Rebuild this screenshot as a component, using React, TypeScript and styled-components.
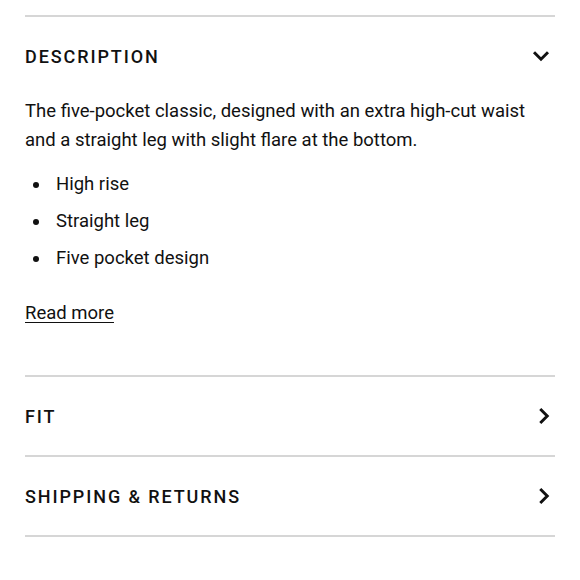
import React from "react";
import styled, { createGlobalStyle } from "styled-components";

const GlobalStyle = createGlobalStyle`
  html, body {
    margin: 0;
    padding: 0;
    background: #ffffff;
  }
  body {
    font-family: Roboto, "Noto Sans", Arial, sans-serif;
    color: #111111;
  }
`;

const Page = styled.div`
  padding: 15px 25px 0;
`;

const Section = styled.section`
  border-top: 2px solid #d6d6d6;
  &:last-child {
    border-bottom: 2px solid #d6d6d6;
  }
`;

const Header = styled.div`
  height: 78px;
  display: flex;
  align-items: center;
  justify-content: space-between;
  cursor: pointer;
`;

const Title = styled.h3`
  margin: 0;
  font-size: 18px;
  font-weight: 500;
  letter-spacing: 1.9px;
  text-transform: uppercase;
  color: #111111;
`;

const Chevron = styled.svg<{ $dir: "down" | "right" }>`
  width: 26px;
  height: 26px;
  margin-right: ${({ $dir }) => ($dir === "down" ? "1px" : "-2px")};
  fill: none;
  stroke: #111111;
  stroke-width: 2.7;
  stroke-linecap: square;
  transform: ${({ $dir }) => ($dir === "right" ? "rotate(-90deg)" : "none")};
`;

const Body = styled.div`
  padding: 2px 0 47px;
  font-size: 18.5px;
  line-height: 29px;
`;

const Paragraph = styled.p`
  margin: 0;
`;

const List = styled.ul`
  margin: 11px 0 0;
  padding: 0;
  list-style: none;
`;

const Item = styled.li`
  display: flex;
  align-items: center;
  padding: 4px 0;
`;

const Bullet = styled.span`
  width: 6px;
  height: 6px;
  margin: 0 17px 0 8px;
  border-radius: 50%;
  background: #111111;
  flex-shrink: 0;
`;

const ReadMore = styled.a`
  display: inline-block;
  margin-top: 22px;
  color: #111111;
  text-decoration: underline;
  text-underline-offset: 3px;
  text-decoration-thickness: 1px;
`;

const ChevronIcon = ({ dir }: { dir: "down" | "right" }) => (
  <Chevron $dir={dir} viewBox="0 0 24 24">
    <polyline points="6.5,9.5 12,15 17.5,9.5" />
  </Chevron>
);

export default function App() {
  const bullets = ["High rise", "Straight leg", "Five pocket design"];
  return (
    <>
      <GlobalStyle />
      <Page>
        <Section>
          <Header>
            <Title>Description</Title>
            <ChevronIcon dir="down" />
          </Header>
          <Body>
            <Paragraph>
              The five-pocket classic, designed with an extra high-cut waist and
              a straight leg with slight flare at the bottom.
            </Paragraph>
            <List>
              {bullets.map((b) => (
                <Item key={b}>
                  <Bullet />
                  {b}
                </Item>
              ))}
            </List>
            <ReadMore href="#">Read more</ReadMore>
          </Body>
        </Section>
        <Section>
          <Header>
            <Title>Fit</Title>
            <ChevronIcon dir="right" />
          </Header>
        </Section>
        <Section>
          <Header>
            <Title>Shipping &amp; Returns</Title>
            <ChevronIcon dir="right" />
          </Header>
        </Section>
      </Page>
    </>
  );
}
